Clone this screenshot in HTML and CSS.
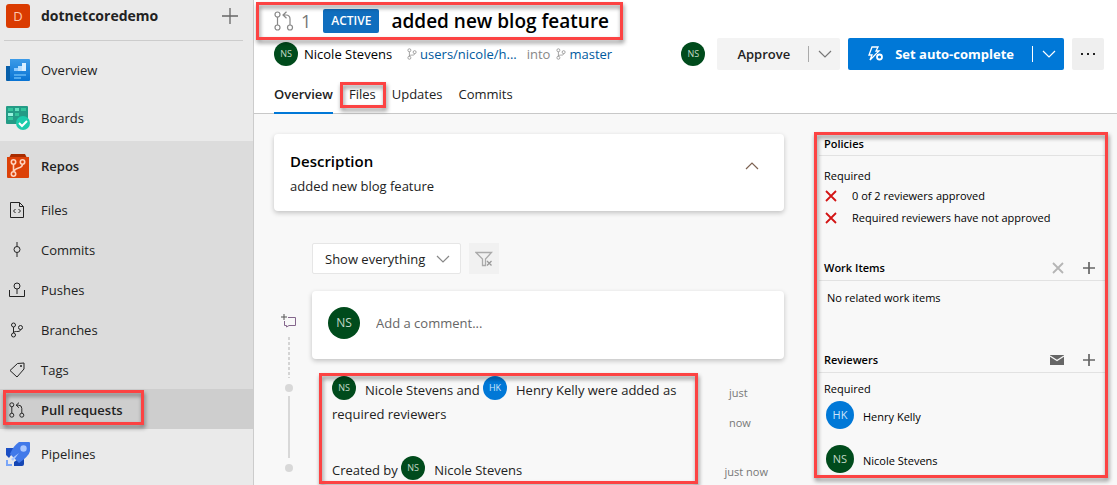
FILE: index.html
```html
<!DOCTYPE html>
<html lang="en">
<head>
<meta charset="utf-8">
<title>Pull request 1: added new blog feature</title>
<link rel="stylesheet" href="styles.css">
</head>
<body>
<svg class="defs" aria-hidden="true">
  <symbol id="branch" viewBox="0 0 16 16"><g fill="none" stroke="currentColor"><circle cx="4.500" cy="3" r="2"/><circle cx="11.500" cy="5.500" r="2"/><circle cx="4.500" cy="13" r="2"/><path d="M4.500 5v6M11.500 7.500c0 2-2 2-4 2s-3 .5-3 1.500"/></g></symbol>
  <symbol id="pull" viewBox="0 0 20 20"><g fill="none" stroke="currentColor" stroke-width="1.200"><circle cx="3.500" cy="3.500" r="2.500"/><circle cx="3.500" cy="16.500" r="2.500"/><circle cx="16" cy="16.500" r="2.500"/><path d="M3.500 6v8M16 14V8q0-4-4-4H9M12.500 .8L9 4l3.500 3.200"/></g></symbol>
  <symbol id="down" viewBox="0 0 14 8"><path d="M1 1l6 6 6-6" fill="none" stroke="currentColor" stroke-width="1.200"/></symbol>
  <symbol id="plus" viewBox="0 0 12 12"><path d="M6 0v12M0 6h12" fill="none" stroke="currentColor" stroke-width="1.700"/></symbol>
  <symbol id="cross" viewBox="0 0 12 12"><path d="M1 1l10 10M11 1L1 11" fill="none" stroke="currentColor" stroke-width="1.800"/></symbol>
</svg>

<div class="app">
  <nav class="sidebar" aria-label="Project">
    <div class="project">
      <span class="project-logo">D</span>
      <span class="project-name">dotnetcoredemo</span>
      <button class="icon-button" aria-label="Add"><svg width="16" height="16" viewBox="0 0 16 16"><path d="M8 0v16M0 8h16" stroke="#666" stroke-width="1.300"/></svg></button>
    </div>
    <a class="hub" href="#">
      <svg width="24" height="24" viewBox="0 0 24 24"><defs><linearGradient id="gb" x1="0" y1="0" x2="0" y2="1"><stop stop-color="#3c9be8"/><stop offset="1" stop-color="#0873d3"/></linearGradient></defs><path d="M0 8h5v15H1q-1 0-1-1z" fill="#075ea9"/><path d="M4 1h19q1 0 1 1v20q0 1-1 1H3q1 0 1-2z" fill="url(#gb)"/><path d="M8 10h4v3H8z" fill="#8fcbff"/><path d="M12 8h4v5h-4z" fill="#b5ddff"/><path d="M16 5h4v8h-4z" fill="#d9efff"/><path d="M8 16h12v2H8zM8 19h7v2H8z" fill="#50a9ee"/></svg>
      Overview</a>
    <a class="hub" href="#">
      <svg width="24" height="24" viewBox="0 0 24 24"><path d="M0 1q0-1 1-1h20q1 0 1 1v17H1q-1 0-1-1z" fill="#249b86"/><path d="M2 2h5v3H2zM15 2h5v3h-5zM9 7h4v3H9zM2 11h5v3H2z" fill="#33c49b"/><path d="M9 2h4v3H9z" fill="#62e1bf"/><path d="M2 7h5v3H2z" fill="#9af3df"/><circle cx="17" cy="17" r="7" fill="#1ccbab"/><path d="M13 17l3 3 5-5" fill="none" stroke="#fff" stroke-width="2"/></svg>
      Boards</a>
    <div class="hub-group">
      <a class="hub hub-open" href="#">
        <svg width="24" height="24" viewBox="0 0 24 24"><path d="M5 0h14l2 4H3z" fill="#a92c00"/><path d="M1 3h22v20q0 1-1 1H2q-1 0-1-1z" fill="#dc4108"/><g fill="none" stroke="#ffd3bf" stroke-width="1.600"><circle cx="7.500" cy="8" r="2.200"/><circle cx="16.500" cy="8" r="2.200"/><circle cx="7.500" cy="20" r="2.200"/><path d="M7.500 10v8M16.500 10q0 3-4 4t-5 4"/></g></svg>
        Repos</a>
      <a class="sub" href="#"><svg width="16" height="16" viewBox="0 0 16 16"><path d="M1.500 .5h9l4 4v11h-13zM10.500 .5v4h4M6.500 7L4.500 9l2 2M9.500 7l2 2-2 2" fill="none" stroke="#222"/></svg>Files</a>
      <a class="sub" href="#"><svg width="16" height="16" viewBox="0 0 16 16"><path d="M8 0v4.500M8 10.500V15" stroke="#222"/><circle cx="8" cy="7.500" r="3" fill="none" stroke="#222"/></svg>Commits</a>
      <a class="sub" href="#"><svg width="16" height="16" viewBox="0 0 16 16"><path d="M.5 8v6.500h15V8M8 7v5" fill="none" stroke="#222"/><circle cx="8" cy="4" r="3" fill="none" stroke="#222"/></svg>Pushes</a>
      <a class="sub" href="#"><svg width="16" height="16"><use href="#branch"/></svg>Branches</a>
      <a class="sub" href="#"><svg width="16" height="16" viewBox="0 0 16 16"><path d="M1 8.500L8.500 1.500l6.500-.500v6L8 15z" fill="none" stroke="#222"/><circle cx="12" cy="4" r="1" fill="#222"/></svg>Tags</a>
      <a class="sub sub-current mark mark-menu" href="#" aria-current="page"><svg width="16" height="16"><use href="#pull"/></svg>Pull requests</a>
    </div>
    <a class="hub" href="#">
      <svg width="24" height="24" viewBox="0 0 24 24"><path d="M0 6h10L3 16 0 13z" fill="#1c4fc4"/><path d="M8 20l10-7v9q0 2-2 2H8z" fill="#1647b4"/><path d="M13 0h10q1 0 1 1v8q-1 5-11 12L4 12Q8 3 13 0z" fill="#4179e9"/><circle cx="17.500" cy="6.500" r="3.200" fill="#a9c7ff"/><path d="M5 17l8-6-6 8z" fill="#a9c7ff"/><path d="M0 18h2v4h4v2H0z" fill="#7aa6f8"/></svg>
      Pipelines</a>
  </nav>

  <main class="main">
    <header class="header">
      <div class="title-row mark mark-title">
        <svg class="muted" width="20" height="20"><use href="#pull"/></svg>
        <span class="number">1</span>
        <span class="status">ACTIVE</span>
        <h1 class="title">added new blog feature</h1>
      </div>
      <div class="meta-row">
        <div class="meta">
          <span class="avatar">NS</span>
          <span class="author">Nicole Stevens</span>
          <a class="ref" href="#"><svg width="12" height="14"><use href="#branch"/></svg>users/nicole/h...</a>
          <span class="into">into</span>
          <a class="ref" href="#"><svg width="12" height="14"><use href="#branch"/></svg>master</a>
        </div>
        <div class="actions">
          <span class="avatar">NS</span>
          <div class="split">
            <button class="split-main">Approve</button>
            <button class="split-more" aria-label="More approval options"><svg width="14" height="8"><use href="#down"/></svg></button>
          </div>
          <div class="split split-primary">
            <button class="split-main"><svg width="16" height="16" viewBox="0 0 16 16"><path d="M4 1h6L8 5h3L2 14l2-5H1z" fill="none" stroke="#fff" stroke-width="1.300"/><circle cx="11.500" cy="11" r="3.800" fill="#0078d7"/><circle cx="11.500" cy="11" r="2.500" fill="none" stroke="#fff" stroke-width="1.800"/></svg>Set auto-complete</button>
            <button class="split-more" aria-label="More completion options"><svg width="14" height="8"><use href="#down"/></svg></button>
          </div>
          <button class="more" aria-label="More actions"><svg width="16" height="4" viewBox="0 0 16 4"><path d="M1 1h2v2H1zM7 1h2v2H7zM13 1h2v2h-2z" fill="#222"/></svg></button>
        </div>
      </div>
      <nav class="tabs" aria-label="Pull request">
        <a class="tab tab-current" href="#" aria-current="page">Overview</a>
        <a class="tab mark mark-tab" href="#">Files</a>
        <a class="tab" href="#">Updates</a>
        <a class="tab" href="#">Commits</a>
      </nav>
    </header>

    <div class="content">
      <div class="feed">
        <section class="card description">
          <div>
            <h2 class="card-title">Description</h2>
            <p class="card-text">added new blog feature</p>
          </div>
          <button class="icon-button" aria-label="Collapse description"><svg width="14" height="8" viewBox="0 0 14 8"><path d="M1 7l6-6 6 6" fill="none" stroke="#7d6252" stroke-width="1.200"/></svg></button>
        </section>

        <div class="filters">
          <div class="select-box">
            <select class="select" aria-label="Filter updates"><option>Show everything</option></select>
            <svg class="select-arrow" width="14" height="8"><use href="#down"/></svg>
          </div>
          <button class="clear" aria-label="Clear filter" disabled><svg width="18" height="16" viewBox="0 0 18 16"><path d="M1 1.500h15.500L10.500 8v6.500h-3V8z" fill="none" stroke="#aaa" stroke-width="1.300"/><path d="M12 10l4.500 4.500M16.500 10L12 14.500" stroke="#999" stroke-width="1.300"/></svg></button>
        </div>

        <div class="row row-comment">
          <div class="rail"><svg width="16" height="14" viewBox="0 0 16 14"><path d="M3 0v6M0 3h6" stroke="#555"/><path d="M7 3.500h7.500v8H8L5.500 13v-1.500h-2V7" fill="none" stroke="#84668c"/></svg><span class="dashes"></span></div>
          <div class="card comment">
            <span class="avatar avatar-large">NS</span>
            <input class="comment-input" type="text" aria-label="Add a comment" placeholder="Add a comment...">
          </div>
        </div>
        <div class="events mark mark-events">
          <div class="row">
            <div class="rail rail-event"><span class="dot"></span><span class="line"></span></div>
            <p class="event"><span class="avatar">NS</span>Nicole Stevens and <span class="avatar avatar-blue">HK</span>Henry Kelly were added as required reviewers</p>
            <span class="time time-wrap">just now</span>
          </div>
          <div class="row">
            <div class="rail rail-event"><span class="dot"></span></div>
            <p class="event">Created by <span class="avatar">NS</span>Nicole Stevens</p>
            <span class="time">just now</span>
          </div>
        </div>
      </div>

      <aside class="side mark mark-side">
        <section class="block">
          <div class="block-head"><h3 class="block-title">Policies</h3></div>
          <div class="policies">
            <p class="label">Required</p>
            <p class="policy"><svg width="12" height="12"><use href="#cross"/></svg>0 of 2 reviewers approved</p>
            <p class="policy"><svg width="12" height="12"><use href="#cross"/></svg>Required reviewers have not approved</p>
          </div>
        </section>
        <section class="block">
          <div class="block-head">
            <h3 class="block-title">Work Items</h3>
            <button class="icon-button faded" aria-label="Remove work items"><svg width="12" height="12"><use href="#cross"/></svg></button>
            <button class="icon-button" aria-label="Add work item"><svg width="12" height="12"><use href="#plus"/></svg></button>
          </div>
          <p class="empty">No related work items</p>
        </section>
        <section class="block">
          <div class="block-head">
            <h3 class="block-title">Reviewers</h3>
            <button class="icon-button" aria-label="Email reviewers"><svg width="14" height="10" viewBox="0 0 14 10"><path d="M0 0h14v10H0z" fill="#666"/><path d="M0 1l7 4.500L14 1" fill="none" stroke="#f8f8f8" stroke-width="1.300"/></svg></button>
            <button class="icon-button" aria-label="Add reviewer"><svg width="12" height="12"><use href="#plus"/></svg></button>
          </div>
          <p class="label label-reviewers">Required</p>
          <div class="reviewer"><span class="avatar avatar-medium avatar-blue">HK</span><span class="reviewer-name">Henry Kelly</span></div>
          <div class="reviewer"><span class="avatar avatar-medium">NS</span><span class="reviewer-name">Nicole Stevens</span></div>
        </section>
      </aside>
    </div>
  </main>
</div>
</body>
</html>
```

FILE: styles.css
```css
* { box-sizing: border-box; }
body { margin: 0; font: 13px/20px "Open Sans", "Noto Sans", sans-serif; color: #222; background: #f8f8f8; }
h1, h2, h3, p { margin: 0; font-weight: 600; }
p { font-weight: 400; }
a { color: inherit; text-decoration: none; }
button, input, select { margin: 0; padding: 0; border: 0; font: inherit; color: inherit; background: none; }
svg { flex: none; display: block; }
.defs { position: absolute; width: 0; height: 0; }

.app { display: grid; grid-template-columns: 254px minmax(0, 1fr); height: 100vh; overflow: hidden; }
.icon-button { display: flex; align-items: center; justify-content: center; color: #666; }

/* Highlight frames */
.mark { position: relative; }
.mark::after { content: ""; position: absolute; z-index: 2; border: 3px solid #fc4343; filter: drop-shadow(1px 3px 2px rgba(0, 0, 0, .45)); pointer-events: none; }
.mark-menu::after { inset: 1px 109px 4px 3px; }
.mark-title::after { inset: -2px -14px -2px -18px; }
.mark-tab::after { inset: 8px -10px 6px -9px; }
.mark-events::after { inset: -5px 86px 2px 45px; }
.mark-side::after { inset: -2px 0 -5px -5px; }

/* Sidebar */
.sidebar { background: #eaeaea; border-right: 1px solid #ccc; }
.project { display: flex; align-items: center; height: 41px; margin: 0 10px 4px 4px; padding: 0 5px 8px 2px; border-bottom: 1px solid #ccc; }
.project-logo { width: 24px; height: 24px; border-radius: 3px; background: #da3b01; color: #ffc9b0; line-height: 24px; text-align: center; }
.project-name { flex: 1; margin-left: 11px; font-size: 14px; font-weight: 700; }
.hub { display: flex; align-items: center; gap: 11px; height: 48px; padding: 2px 0 0 6px; }
.hub-open { font-weight: 600; }
.hub-group { background: #dcdcdc; }
.sub { display: flex; align-items: center; gap: 16px; height: 40px; padding: 2px 0 0 9px; }
.sub-current { background: #cecece; font-weight: 600; }

/* Header */
.main { min-width: 0; }
.header { padding: 4px 13px 0 20px; background: #fff; border-bottom: 1px solid #c8c8c8; }
.title-row { display: flex; align-items: center; width: fit-content; height: 34px; }
.muted { color: #888; }
.number { margin: 0 12px 0 7px; font-size: 18px; color: #777; }
.status { padding: 0 8px; border-radius: 2px; background: #106ebe; color: #fff; font-size: 12px; font-weight: 600; line-height: 24px; }
.title { margin-left: 12px; font-size: 19px; line-height: 24px; color: #000; }
.meta-row { display: flex; justify-content: space-between; height: 32px; }
.meta, .actions { display: flex; align-items: center; }
.author { margin: 0 14px 0 6px; color: #000; }
.ref { display: flex; align-items: center; gap: 2px; color: #005a9e; }
.ref svg { color: #888; }
.into { margin: 0 5px 0 10px; color: #888; }
.avatar { display: inline-block; flex: none; width: 24px; height: 24px; border-radius: 50%; background: #004b1c; color: #c0d8c6; font-size: 9px; line-height: 24px; text-align: center; }
.avatar-blue { background: #0078d7; color: #cce5fa; }
.avatar-medium { width: 28px; height: 28px; font-size: 11px; line-height: 28px; }
.avatar-large { width: 32px; height: 32px; font-size: 12px; line-height: 32px; }
.actions { gap: 8px; }
.actions .avatar { margin-right: 4px; }
.split { display: flex; align-items: center; height: 32px; border-radius: 2px; background: #f3f3f3; font-weight: 600; }
.split-main { display: flex; align-items: center; gap: 11px; height: 32px; padding: 0 18px 0 20px; }
.split-more { display: flex; align-items: center; justify-content: center; width: 32px; height: 16px; border-left: 1px solid #aaa; color: #777; }
.split-primary { background: #0078d7; color: #fff; font-weight: 700; }
.split-primary .split-more { border-color: #fff; color: #fff; }
.more { display: flex; align-items: center; justify-content: center; width: 32px; height: 32px; border-radius: 2px; background: #efefef; }
.tabs { display: flex; gap: 16px; height: 39px; margin-top: 4px; }
.tab { height: 40px; line-height: 40px; }
.tab-current { border-bottom: 2px solid #0078d7; font-weight: 600; }

/* Content */
.content { display: grid; grid-template-columns: minmax(0, 510fr) minmax(0, 289fr); gap: 35px; align-items: start; padding: 20px 9px 0 20px; }
.card { border-radius: 4px; background: #fff; box-shadow: 0 2px 5px rgba(0, 0, 0, .22); }
.description { display: flex; justify-content: space-between; padding: 15px 25px 13px 16px; }
.description .icon-button { height: 34px; }
.card-title { font-size: 15px; line-height: 24px; color: #000; }
.card-text { padding-top: 2px; line-height: 23px; }
.filters { display: flex; gap: 8px; margin: 32px 0 17px 38px; }
.select-box { position: relative; }
.select { appearance: none; width: 149px; height: 31px; padding: 0 12px; border: 1px solid #e6e6e6; border-radius: 2px; background: #fff; }
.select-arrow { position: absolute; top: 12px; right: 11px; color: #888; pointer-events: none; }
.clear { display: flex; align-items: center; justify-content: center; width: 30px; height: 31px; background: #f1f1f1; }
.row { display: flex; }
.rail { display: flex; flex-direction: column; align-items: center; width: 30px; margin-right: 8px; }
.row-comment { height: 87px; }
.row-comment .rail { padding-top: 23px; }
.dashes { flex: 1; width: 2px; margin-top: 9px; background: repeating-linear-gradient(#d4d4d4 0 3px, transparent 3px 5px); }
.rail-event { padding-top: 6px; gap: 4px; }
.dot { width: 8px; height: 8px; border-radius: 50%; background: #d8d8d8; }
.line { flex: 1; width: 2px; background: #d8d8d8; }
.comment { display: flex; flex: 1; align-items: center; gap: 16px; height: 68px; padding: 0 16px 4px; }
.comment-input { flex: 1; min-width: 0; height: 32px; }
.comment-input::placeholder { color: #666; opacity: 1; }
.events .row { padding-right: 16px; }
.events .row:first-child { height: 80px; }
.event { flex: 1; padding: 0 14px 0 20px; line-height: 24px; }
.event .avatar { margin: -8px 9px -4px 0; vertical-align: 4px; }
.time { font-size: 11px; line-height: 28px; color: #777; }
.time-wrap { width: 39px; line-height: 30px; }
.events .row:last-child { height: 28px; }

/* Side panel */
.side { font-size: 11px; color: #000; }
.block-head { display: flex; align-items: center; gap: 19px; height: 24px; padding: 0 13px 2px 5px; border-bottom: 1px solid #e2e2e2; }
.block:first-child .block-head { height: 22px; }
.block-title { flex: 1; font-size: 11px; line-height: 20px; }
.faded { color: #b5b5b5; }
.policies { padding: 11px 0 28px 5px; }
.label { line-height: 18px; }
.policy { display: flex; align-items: center; gap: 15px; height: 22px; padding-left: 1px; }
.policy svg { color: #d31414; }
.empty { padding: 7px 8px; height: 68px; }
.label-reviewers { padding: 7px 5px 3px; }
.reviewer { display: flex; align-items: center; gap: 9px; height: 28px; margin: 0 0 16px 7px; }
.reviewer-name { padding-top: 4px; }
.reviewer:last-child { margin-bottom: 0; }
```
